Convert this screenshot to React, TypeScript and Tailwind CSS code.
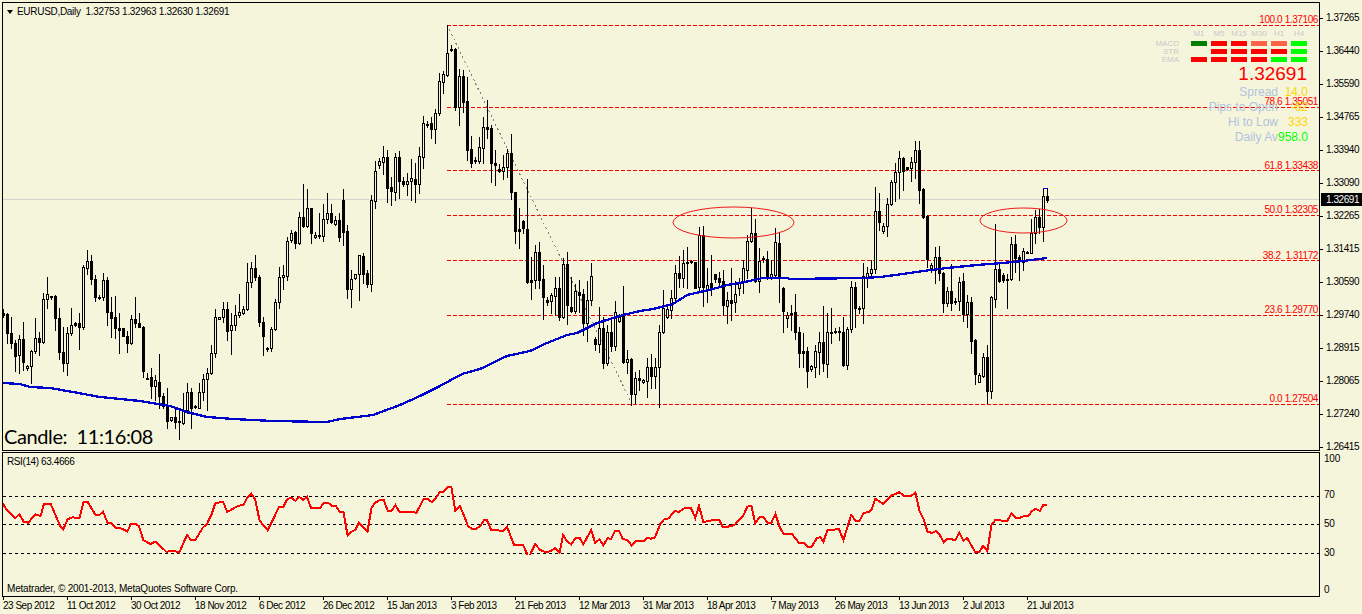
import { Fragment } from "react";

// [high, bodyTop, bodyBottom, low, bullish] in page pixels; x = 3 + 4 * index
type Bar = number[];

// first stretch was read off a 3x crop, so y = 200 + v / 3
const EARLY_BARS: Bar[] = [
  [328, 340, 344, 350, 0], [340, 342, 400, 430, 0], [350, 400, 430, 445, 0], [420, 430, 468, 512, 0],
  [405, 418, 466, 520, 1], [365, 418, 485, 510, 0], [495, 497, 503, 510, 1], [450, 452, 497, 550, 1],
  [355, 415, 452, 458, 1], [395, 415, 425, 465, 0], [280, 298, 425, 430, 1], [232, 282, 298, 325, 1],
  [288, 288, 291, 298, 0], [285, 288, 355, 390, 0], [325, 355, 455, 478, 0], [380, 455, 488, 512, 0],
  [380, 400, 488, 524, 1], [325, 376, 400, 405, 1], [365, 370, 374, 378, 0], [340, 370, 380, 447, 0],
  [195, 200, 380, 388, 1], [150, 182, 203, 222, 1], [165, 182, 236, 252, 0], [225, 236, 292, 302, 0],
  [285, 291, 292, 298, 0], [218, 240, 292, 300, 1], [230, 240, 335, 375, 0], [290, 335, 354, 412, 0],
  [288, 352, 385, 415, 0], [340, 385, 390, 458, 0], [385, 385, 407, 408, 0], [392, 407, 430, 455, 0],
  [345, 358, 430, 432, 1], [292, 358, 368, 380, 0], [340, 368, 380, 380, 0], [378, 380, 512, 530, 0],
  [520, 533, 535, 535, 0], [503, 532, 557, 595, 0], [525, 541, 557, 600, 1], [462, 545, 587, 625, 0],
  [580, 587, 618, 625, 0], [565, 618, 662, 685, 0], [650, 652, 660, 662, 1], [625, 652, 665, 685, 0],
  [630, 664, 667, 718, 0], [580, 630, 668, 672, 1], [550, 576, 630, 640, 1], [565, 576, 625, 683, 0],
  [615, 617, 621, 625, 0], [550, 575, 623, 625, 1], [522, 538, 575, 600, 1], [505, 520, 538, 630, 1],
  [435, 460, 520, 522, 1], [328, 350, 460, 472, 1], [350, 350, 357, 358, 1], [305, 328, 350, 365, 1],
  [305, 328, 392, 420, 0], [340, 376, 390, 462, 1], [315, 344, 376, 390, 1], [282, 335, 344, 350, 1],
  [318, 326, 340, 342, 1], [190, 247, 328, 330, 1], [185, 205, 247, 262, 1], [165, 205, 232, 240, 0],
  [225, 232, 365, 378, 0], [350, 365, 407, 465, 0], [440, 444, 446, 452, 0], [380, 388, 445, 452, 1],
  [298, 307, 388, 390, 1], [200, 232, 307, 323, 1], [195, 226, 232, 268, 1], [112, 124, 228, 240, 1],
  [90, 100, 120, 125, 1], [92, 97, 128, 145, 0], [35, 52, 128, 132, 1],
];

const LATER_BARS: Bar[] = [
  [184, 217, 226, 227, 0], [189, 208, 226, 227, 1], [208, 208, 233, 243, 0], [232, 235, 237, 238, 1],
  [213, 235, 236, 238, 0], [204, 219, 236, 241, 1], [193, 213, 219, 223, 1], [204, 213, 222, 223, 0],
  [216, 220, 224, 225, 1], [213, 220, 237, 241, 0], [189, 200, 232, 245, 0], [225, 231, 289, 298, 0],
  [270, 279, 289, 307, 1], [274, 274, 278, 279, 1], [255, 255, 274, 300, 1], [253, 256, 274, 283, 0],
  [270, 273, 284, 287, 0], [195, 200, 284, 291, 1], [161, 171, 201, 208, 1], [158, 161, 165, 168, 1],
  [146, 157, 162, 174, 1], [150, 157, 188, 202, 0], [177, 187, 191, 205, 0], [153, 157, 192, 200, 1],
  [151, 157, 181, 198, 0], [177, 181, 184, 186, 0], [173, 181, 184, 195, 1], [159, 178, 181, 200, 1],
  [163, 179, 184, 202, 0], [147, 156, 184, 193, 1], [116, 123, 157, 168, 1], [121, 124, 125, 127, 0],
  [117, 123, 129, 138, 0], [109, 113, 129, 143, 1], [73, 81, 113, 115, 1], [71, 74, 82, 93, 1],
  [25, 53, 75, 76, 1], [45, 49, 50, 51, 0], [48, 49, 107, 110, 0], [69, 76, 107, 125, 1],
  [70, 76, 102, 112, 0], [77, 101, 150, 160, 0], [136, 149, 163, 167, 0], [157, 160, 161, 163, 0],
  [137, 147, 161, 163, 1], [117, 127, 148, 163, 1], [100, 127, 129, 138, 0], [125, 128, 163, 182, 0],
  [150, 163, 165, 185, 0], [164, 169, 171, 172, 0], [155, 167, 171, 179, 1], [149, 153, 167, 177, 1],
  [134, 153, 192, 199, 0], [192, 192, 231, 243, 0], [208, 229, 231, 248, 0], [220, 221, 228, 233, 0],
  [179, 229, 282, 283, 0], [257, 280, 282, 299, 0], [245, 252, 280, 288, 1], [242, 252, 280, 288, 0],
  [265, 279, 297, 319, 0], [297, 300, 302, 305, 0], [293, 295, 301, 313, 1], [277, 288, 296, 315, 1],
  [277, 288, 317, 320, 0], [258, 264, 317, 318, 1], [252, 264, 305, 324, 0], [277, 307, 311, 312, 0],
  [284, 291, 311, 313, 1], [280, 292, 295, 312, 0], [289, 294, 323, 335, 0], [281, 300, 323, 341, 1],
  [263, 276, 300, 305, 1], [337, 339, 344, 350, 0], [307, 328, 344, 352, 1], [317, 328, 363, 368, 0],
  [325, 332, 363, 365, 1], [320, 332, 346, 351, 0], [301, 312, 346, 350, 1], [314, 317, 321, 322, 1],
  [286, 315, 362, 363, 0], [350, 359, 362, 373, 1], [358, 359, 394, 405, 0], [372, 378, 394, 403, 1],
  [370, 378, 380, 390, 0], [379, 380, 382, 383, 1], [358, 367, 381, 397, 1], [354, 367, 376, 388, 0],
  [358, 367, 376, 388, 1], [325, 332, 367, 407, 1], [290, 308, 332, 333, 1], [305, 309, 317, 318, 1],
  [290, 298, 310, 318, 1], [265, 273, 298, 300, 1], [256, 273, 278, 287, 0], [250, 263, 278, 287, 1],
  [247, 262, 263, 288, 0], [260, 261, 262, 263, 0], [262, 262, 288, 288, 0], [227, 235, 287, 290, 1],
  [226, 235, 287, 306, 0], [268, 285, 290, 302, 1], [255, 283, 287, 295, 0], [274, 274, 279, 282, 0],
  [272, 278, 282, 286, 0], [270, 281, 305, 315, 0], [292, 300, 306, 323, 1], [268, 300, 303, 320, 0],
  [281, 294, 302, 312, 1], [278, 282, 288, 295, 1], [260, 268, 282, 293, 1], [235, 241, 270, 278, 1],
  [208, 233, 241, 242, 1], [219, 233, 281, 282, 0], [248, 261, 281, 292, 1], [256, 258, 259, 262, 0],
  [251, 259, 278, 279, 0], [260, 274, 278, 279, 1], [228, 242, 275, 278, 1], [233, 243, 278, 302, 0],
  [287, 288, 311, 332, 0], [312, 315, 318, 327, 1], [305, 313, 314, 330, 0], [294, 312, 332, 339, 0],
  [327, 332, 353, 367, 0], [333, 351, 353, 367, 0], [347, 351, 371, 387, 0], [365, 366, 369, 371, 1],
  [345, 351, 367, 377, 1], [332, 342, 352, 374, 1], [306, 342, 363, 371, 0], [313, 332, 364, 377, 1],
  [308, 332, 333, 343, 0], [328, 331, 332, 333, 0], [327, 331, 332, 340, 0], [317, 332, 365, 366, 0],
  [327, 329, 365, 369, 1], [281, 287, 329, 332, 1], [282, 287, 308, 327, 0], [306, 308, 309, 313, 0],
  [263, 276, 308, 323, 1], [267, 273, 277, 287, 1], [260, 269, 273, 277, 1], [187, 211, 269, 273, 1],
  [193, 211, 222, 230, 0], [223, 226, 231, 233, 1], [198, 204, 226, 236, 1], [180, 182, 204, 205, 1],
  [163, 172, 182, 201, 1], [151, 158, 172, 198, 1], [157, 158, 171, 190, 0], [167, 167, 169, 170, 0],
  [157, 162, 168, 181, 1], [141, 150, 162, 178, 1], [141, 150, 190, 203, 0], [188, 189, 217, 218, 0],
  [215, 216, 259, 267, 0], [263, 265, 268, 272, 1], [247, 257, 270, 283, 1], [246, 257, 273, 280, 0],
  [272, 273, 303, 312, 0], [287, 291, 303, 306, 1], [264, 291, 303, 310, 0], [298, 301, 302, 304, 0],
  [277, 282, 301, 310, 1], [273, 281, 314, 321, 0], [295, 302, 314, 327, 1], [297, 302, 341, 353, 0],
  [339, 340, 374, 384, 0], [373, 375, 382, 382, 1], [353, 357, 376, 377, 1], [345, 357, 391, 403, 0],
  [296, 297, 391, 398, 1], [224, 269, 299, 307, 1], [262, 269, 281, 282, 0], [273, 275, 280, 282, 0],
  [274, 279, 280, 308, 1], [237, 244, 279, 280, 1], [235, 244, 258, 272, 0], [255, 257, 259, 280, 0],
  [248, 251, 262, 270, 1], [251, 252, 253, 253, 0], [219, 233, 253, 253, 1], [210, 217, 233, 243, 1],
  [209, 217, 227, 233, 0], [188, 196, 227, 241, 1], [188, 196, 200, 202, 0],
];

const BARS: Bar[] = [
  ...EARLY_BARS.map((bar) => [...bar.slice(0, 4).map((v) => Math.round(200 + v / 3)), bar[4]]),
  ...LATER_BARS,
];

const MA_LINE =
  "3,383 20,384 30,387 50,388 73,392 100,397 140,401 170,406 187,412 207,417 233,419 273,421 327,422 340,419 357,417 373,415 400,405 420,396 440,386 462,374 480,369 507,356 530,351 547,343 567,335 577,333 597,323 623,315 640,311 653,309 673,304 687,295 713,289 727,285 740,283 763,278 787,278 790,279 863,278 880,277 903,274 923,271 947,268 977,265 1003,263 1023,261 1047,258";

// RSI vertices, read off two crops (x at 2.958x, y at 3x)
const RSI_LEFT = [
  8,160, 20,180, 45,205, 57,193, 70,215, 84,218, 104,193, 120,198, 130,162, 150,162, 178,228, 187,238, 200,208, 214,202, 235,204, 247,157, 259,155, 282,194, 295,194, 305,185, 318,218, 328,218, 342,233, 362,236, 376,245, 388,221, 400,221, 411,228, 424,270, 445,282, 460,275, 492,305, 515,302, 530,308, 553,255, 565,270, 578,270, 600,233, 612,222, 625,195, 637,160, 660,155, 672,186, 705,167, 720,165, 732,142, 743,131, 755,148, 768,212, 792,241, 825,172, 838,170, 850,147, 862,143, 874,153, 885,141, 897,150, 908,141, 920,174, 947,174, 958,158, 970,158, 982,167, 994,168, 1004,185, 1016,185, 1028,256, 1040,245, 1051,239, 1062,218, 1087,245, 1099,173, 1110,158, 1124,150, 1135,150, 1147,183, 1158,183, 1170,165, 1182,187, 1205,187, 1212,185, 1232,188, 1252,148, 1265,147, 1277,156, 1290,143, 1300,127, 1312,125, 1325,110, 1335,110, 1347,183, 1360,168, 1372,195, 1384,228, 1396,237, 1407,237, 1420,228, 1432,210, 1440,209, 1453,240, 1465,241, 1488,242, 1500,230, 1520,284, 1547,284, 1560,314,
];
const RSI_RIGHT = [
  0,315, 15,282, 30,300, 45,306, 60,304, 75,294, 88,307, 98,255, 110,275, 122,283, 135,265, 147,264, 158,283, 181,240, 193,279, 205,268, 217,286, 229,265, 240,266, 252,242, 263,242, 275,268, 288,269, 300,286, 316,272, 338,272, 347,264, 358,266, 370,262, 385,222, 397,208, 410,205, 428,183, 440,186, 458,174, 476,174, 489,204, 500,168, 513,216, 528,213, 545,210, 560,210, 570,230, 585,230, 605,225, 630,198, 643,170, 655,167, 666,220, 680,200, 690,200, 703,220, 714,218, 726,192, 738,230, 750,252, 775,252, 795,278, 810,279, 822,291, 833,291, 848,265, 858,261, 868,275, 880,240, 900,239, 913,236, 927,270, 950,195, 963,213, 975,213, 987,188, 1000,187, 1010,180, 1021,146, 1045,162, 1070,135, 1080,133, 1092,126, 1105,137, 1128,137, 1140,128, 1152,183, 1163,205, 1176,245, 1190,249, 1200,243, 1212,255, 1224,276, 1236,266, 1258,270, 1270,248, 1282,272, 1293,264, 1317,306, 1328,307, 1340,288, 1353,303, 1365,225, 1376,210, 1412,213, 1424,190, 1438,203, 1450,203, 1462,198, 1474,197, 1486,182, 1496,177, 1508,183, 1519,164, 1530,164,
];

function rsiPoints(values: number[], originX: number) {
  const out: string[] = [];
  for (let i = 0; i < values.length; i += 2) {
    out.push(`${(originX + values[i] / 2.958).toFixed(1)},${(450 + values[i + 1] / 3).toFixed(1)}`);
  }
  return out.join(" ");
}

const FIB_LEVELS = [25, 107, 170, 215, 260, 315, 404];

const FIB_LABELS = [
  { text: "100.0 1.37106", cls: "top-[11px]" },
  { text: "78.6 1.35051", cls: "top-[93px]" },
  { text: "61.8 1.33438", cls: "top-[157px]" },
  { text: "50.0 1.32305", cls: "top-[201px]" },
  { text: "38.2  1.31172", cls: "top-[247px]" },
  { text: "23.6 1.29770", cls: "top-[301px]" },
  { text: "0.0 1.27504", cls: "top-[390px]" },
];

const PRICES = [
  "1.37265", "1.36440", "1.35590", "1.34765", "1.33940", "1.33090", "1.32265",
  "1.31415", "1.30590", "1.29740", "1.28915", "1.28065", "1.27240", "1.26415",
];

const DATES = [
  "23 Sep 2012", "11 Oct 2012", "30 Oct 2012", "18 Nov 2012", "6 Dec 2012", "26 Dec 2012",
  "15 Jan 2013", "3 Feb 2013", "21 Feb 2013", "12 Mar 2013", "31 Mar 2013", "18 Apr 2013",
  "7 May 2013", "26 May 2013", "13 Jun 2013", "2 Jul 2013", "21 Jul 2013",
];

const RSI_AXIS = [
  { text: "100", cls: "mt-[3px]" },
  { text: "70", cls: "mt-[28px]" },
  { text: "50", cls: "mt-[21px]" },
  { text: "30", cls: "mt-[21px]" },
  { text: "0", cls: "mt-[29px]" },
];

const TIMEFRAMES = ["M1", "M5", "M15", "M30", "H1", "H4"];

const SIGNALS = [
  { label: "MACD", cells: ["bg-[#008000]", "bg-[#ff0000]", "bg-[#ff0000]", "bg-[#ff6347]", "bg-[#ff6347]", "bg-[#00ff00]"] },
  { label: "STR", cells: ["bg-transparent", "bg-[#ff0000]", "bg-[#ff0000]", "bg-[#ff0000]", "bg-[#ff0000]", "bg-[#00ff00]"] },
  { label: "EMA", cells: ["bg-[#ff0000]", "bg-[#ff0000]", "bg-[#ff0000]", "bg-[#ff0000]", "bg-[#00ff00]", "bg-[#00ff00]"] },
];

const STATS = [
  { label: "Spread", value: "14.0", color: "text-[#ffd700]" },
  { label: "Pips to Open", value: "-62", color: "text-[#ffd700]" },
  { label: "Hi to Low", value: "333", color: "text-[#ffd700]" },
  { label: "Daily Av", value: "958.0", color: "text-[#00ff00]" },
];

const sans = "font-['Liberation_Sans',Arial,sans-serif]";

function Candles() {
  return (
    <>
      {BARS.map(([high, top, bottom, low, bull], i) => {
        const x = 3 + 4 * i;
        const bodyH = Math.max(bottom - top, 1);
        return (
          <Fragment key={i}>
            <rect x={x} y={high} width={1} height={low - high + 1} fill="#000" />
            <rect x={x - 1} y={top} width={3} height={bodyH + 1} fill="#000" />
            {bull === 1 && bodyH > 1 && (
              <rect x={x} y={top + 1} width={1} height={bodyH - 1} fill="#f5f5dc" />
            )}
          </Fragment>
        );
      })}
    </>
  );
}

function MainChart() {
  return (
    <div className="relative w-[1318px] h-[449px] shrink-0 border border-black">
      <svg
        className="block w-[1316px] h-[447px]"
        viewBox="3 3 1316 447"
        shapeRendering="crispEdges"
      >
        <rect x={3} y={199} width={1316} height={1} fill="#d3d3d3" />
        {FIB_LEVELS.map((y) => (
          <line key={y} x1={447} x2={1319} y1={y + 0.5} y2={y + 0.5} stroke="#ff0000" strokeDasharray="4 2" />
        ))}
        <line x1={447} y1={25} x2={632} y2={404} stroke="#808080" strokeDasharray="2 3" />
        <Candles />
        <g shapeRendering="auto" fill="none" stroke="#f01818">
          <ellipse cx={733.5} cy={222.5} rx={60.5} ry={15.5} />
          <ellipse cx={1023.5} cy={220.5} rx={43.5} ry={12.5} />
        </g>
        <polyline points={MA_LINE} fill="none" stroke="#0000cd" strokeWidth={2.3} />
        <rect x={1043} y={188} width={5} height={1} fill="#0000cd" />
      </svg>

      {/* symbol header */}
      <div className={`absolute left-[4px] top-[3px] flex items-center h-3 text-[10px] leading-3 tracking-[-0.3px] text-black whitespace-pre ${sans}`}>
        <span className="w-0 h-0 border-x-[3.5px] border-x-transparent border-t-[4px] border-t-black mr-[4px]" />
        EURUSD,Daily  1.32753 1.32963 1.32630 1.32691
      </div>

      {/* fibonacci labels */}
      {FIB_LABELS.map((f) => (
        <div
          key={f.text}
          className={`absolute right-[1px] ${f.cls} text-[10px] leading-3 tracking-[-0.4px] text-[#ff0000] whitespace-pre ${sans}`}
        >
          {f.text}
        </div>
      ))}

      {/* signal dashboard */}
      <div className={`absolute left-[1150px] top-[27px] w-[158px] flex flex-col ${sans}`}>
        <div className="flex justify-end gap-[4px] pr-[4px]">
          {TIMEFRAMES.map((t) => (
            <span key={t} className="w-4 text-center text-[8px] leading-[8px] text-[#c8c8c8]">{t}</span>
          ))}
        </div>
        <div className="flex flex-col gap-[3px] mt-[3px]">
          {SIGNALS.map((row) => (
            <div key={row.label} className="flex items-center justify-end gap-[4px] pr-[4px] relative">
              <span className="absolute left-0 w-[26px] text-right text-[8px] leading-[8px] text-[#c8c8c8]">{row.label}</span>
              {row.cells.map((c, i) => (
                <span key={i} className={`w-4 h-[5px] ${c}`} />
              ))}
            </div>
          ))}
        </div>
        <div className="mt-[2px] pr-[4px] text-right text-[19px] leading-[20px] text-[#ff0000]">1.32691</div>
        <div className="flex flex-col mt-px pr-[3px]">
          {STATS.map((s) => (
            <div key={s.label} className="flex h-[15px] items-center justify-end text-[12px] leading-[15px] whitespace-nowrap">
              <span className="text-[#b0c4de]">{s.label}</span>
              <span className={`w-[30px] text-right ${s.color}`}>{s.value}</span>
            </div>
          ))}
        </div>
      </div>

      {/* candle timer */}
      <div className="absolute left-[1px] bottom-[2px] text-[20px] leading-6 tracking-[-0.4px] text-black whitespace-pre font-['Lato',sans-serif]">
        Candle:  11:16:08
      </div>
    </div>
  );
}

function PriceAxis() {
  return (
    <div className="relative flex-1 h-[449px] flex flex-col gap-[25px] pt-[12px]">
      {PRICES.map((p) => (
        <div key={p} className="flex items-center h-2 shrink-0">
          <span className="w-[3px] h-px bg-black" />
          <span className={`ml-[3px] text-[10px] leading-2 tracking-[-0.45px] text-black ${sans}`}>{p}</span>
        </div>
      ))}
      <div className={`absolute left-[1px] top-[191px] w-[41px] h-[13px] pl-[5px] bg-black text-white text-[10px] leading-[13px] tracking-[-0.45px] ${sans}`}>
        1.32691
      </div>
    </div>
  );
}

function RsiPane() {
  return (
    <div className="relative w-[1318px] h-[145px] shrink-0 border border-black">
      <svg className="block w-[1316px] h-[143px]" viewBox="3 453 1316 143" shapeRendering="crispEdges">
        {[496, 524, 553].map((y) => (
          <line key={y} x1={3} x2={1319} y1={y + 0.5} y2={y + 0.5} stroke="#000" strokeDasharray="3 3" />
        ))}
        <polyline points={rsiPoints(RSI_LEFT, 0)} fill="none" stroke="#ff0000" strokeWidth={2} />
        <polyline points={rsiPoints(RSI_RIGHT, 530)} fill="none" stroke="#ff0000" strokeWidth={2} />
      </svg>
      <div className={`absolute left-[4px] top-[3px] text-[10px] leading-3 tracking-[-0.4px] text-black ${sans}`}>RSI(14) 63.4666</div>
      <div className={`absolute left-[4px] bottom-[1px] text-[10px] leading-3 tracking-[-0.2px] text-black ${sans}`}>
        Metatrader, © 2001-2013, MetaQuotes Software Corp.
      </div>
    </div>
  );
}

export default function App() {
  return (
    <div className="w-[1362px] h-[614px] overflow-hidden bg-[#f5f5dc] pl-[2px] pt-[2px] flex flex-col">
      <div className="flex">
        <MainChart />
        <PriceAxis />
      </div>

      <div className="flex mt-px">
        <RsiPane />
        <div className={`flex flex-col ml-[4px] ${sans}`}>
          {RSI_AXIS.map((r) => (
            <span key={r.text} className={`${r.cls} text-[10px] leading-2 tracking-[-0.2px] text-black`}>{r.text}</span>
          ))}
        </div>
      </div>

      <div className={`flex pl-[1px] ${sans}`}>
        {DATES.map((d) => (
          <div key={d} className="w-[64px] shrink-0 flex flex-col">
            <span className="w-px h-[3px] bg-black" />
            <span className="text-[10px] leading-3 tracking-[-0.5px] text-black whitespace-nowrap">{d}</span>
          </div>
        ))}
      </div>
    </div>
  );
}
